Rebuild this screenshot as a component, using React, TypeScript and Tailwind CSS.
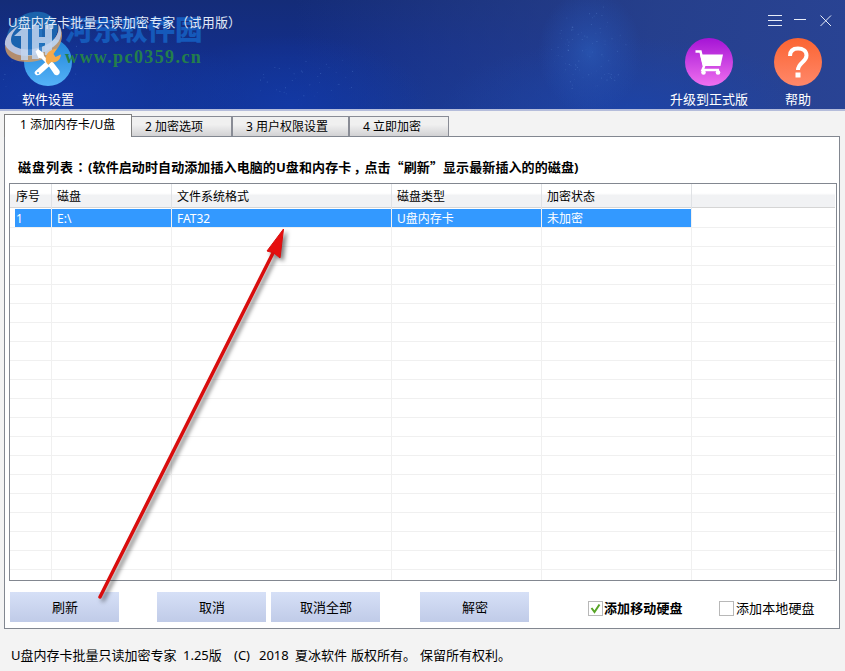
import type { ReactNode } from 'react';

const columns = [
  { label: '序号', value: '1' },
  { label: '磁盘', value: 'E:\\' },
  { label: '文件系统格式', value: 'FAT32' },
  { label: '磁盘类型', value: 'U盘内存卡' },
  { label: '加密状态', value: '未加密' },
];

const grid = 'grid grid-cols-[42px_120px_220px_150px_150px_1fr]';

/** Full-width punctuation, centred in its cell */
function Punct({ children }: { children: ReactNode }) {
  return <span className="font-['Noto_Sans_CJK_TC',sans-serif]">{children}</span>;
}

/** Cluster of faint stars scattered over the header */
function Stars({ cx, cy, rx, ry, count }: { cx: number; cy: number; rx: number; ry: number; count: number }) {
  return (
    <g fill="#7fb0f0">
      {Array.from({ length: count }, (_, i) => {
        const angle = i * i * 1.37;
        const r = Math.sqrt((i + 0.5) / count);
        const jitter = ((i * 37) % 11) - 5;
        return (
          <circle
            key={i}
            cx={cx + Math.cos(angle) * rx * r + jitter}
            cy={cy + Math.sin(angle) * ry * r - jitter}
            r={0.5}
            opacity={0.1 + ((i * 7) % 5) * 0.06}
          />
        );
      })}
    </g>
  );
}

function HeaderBackground() {
  return (
    <svg className="absolute inset-0" width="845" height="109" viewBox="0 0 845 109">
      <defs>
        <linearGradient id="sky" x1="0" y1="0" x2="0" y2="1">
          <stop offset="0" stopColor="#142c78" />
          <stop offset="0.45" stopColor="#132e88" />
          <stop offset="1" stopColor="#123494" />
        </linearGradient>
        <linearGradient id="side" x1="0" y1="0" x2="1" y2="0">
          <stop offset="0.35" stopColor="#2f4590" stopOpacity="0" />
          <stop offset="0.78" stopColor="#2a4490" stopOpacity="0.8" />
          <stop offset="1" stopColor="#2a4494" stopOpacity="0.95" />
        </linearGradient>
        <radialGradient id="glow">
          <stop offset="0" stopColor="#2a5ab8" stopOpacity="0.7" />
          <stop offset="0.5" stopColor="#2752b2" stopOpacity="0.4" />
          <stop offset="1" stopColor="#2452b5" stopOpacity="0" />
        </radialGradient>
        <radialGradient id="glowLeft">
          <stop offset="0" stopColor="#1339a6" stopOpacity="0.85" />
          <stop offset="1" stopColor="#1339a6" stopOpacity="0" />
        </radialGradient>
        <radialGradient id="glowRight">
          <stop offset="0" stopColor="#1c44aa" stopOpacity="0.85" />
          <stop offset="1" stopColor="#1c44aa" stopOpacity="0" />
        </radialGradient>
      </defs>
      <rect width="845" height="109" fill="url(#sky)" />
      <rect width="845" height="109" fill="url(#side)" />
      <ellipse cx="290" cy="105" rx="140" ry="70" fill="url(#glowLeft)" />
      <ellipse cx="60" cy="95" rx="190" ry="75" fill="url(#glowLeft)" />
      <ellipse cx="630" cy="112" rx="190" ry="75" fill="url(#glowRight)" />
      <ellipse cx="590" cy="52" rx="52" ry="62" fill="url(#glow)" />
      <Stars cx={590} cy={50} rx={34} ry={45} count={90} />
      <Stars cx={309} cy={80} rx={50} ry={20} count={40} />
      <Stars cx={30} cy={60} rx={60} ry={45} count={50} />
    </svg>
  );
}

function ToolButton({ label, className, children }: { label: string; className: string; children: ReactNode }) {
  return (
    <button className={`flex flex-col items-center ${className}`}>
      {children}
      <span className="mt-1 text-[13px] leading-[18px] whitespace-nowrap text-white">{label}</span>
    </button>
  );
}

function SettingsIcon() {
  return (
    <svg width="48" height="48" viewBox="0 0 48 48">
      <defs>
        <linearGradient id="blue" x1="0" y1="0" x2="0" y2="1">
          <stop offset="0" stopColor="#1e83d8" />
          <stop offset="1" stopColor="#55b2f7" />
        </linearGradient>
      </defs>
      <circle cx="24" cy="24" r="24" fill="url(#blue)" />
    </svg>
  );
}

/** Crossed screwdriver and wrench of the settings button */
function ToolsGlyph() {
  return (
    <svg className="absolute top-[38px] left-[24px]" width="48" height="48" viewBox="0 0 48 48">
      <path d="M11.500 13.500l2.500-2.500 5.500 4 .500 3 5 5-2.500 2.500-5-5-3-.500z" fill="#fff" />
      <path d="M24 27l4-4 7 9c2.500 3-1.500 7-4.500 4.500z" fill="#fff" />
      <path d="M22 24c-1-6 1-12 11-13.500l-3.500 5.500 2 3 5.500-2.500c-1 7-5.500 8.500-10 7.500l-3 3z" fill="#f5a94a" />
      <path d="M11.500 33l10-9 4 4-9.500 8.500c-4 2.500-7-1.500-4.500-3.500z" fill="#fff" />
      <circle cx="14" cy="35" r="1" fill="#4ba8ef" />
    </svg>
  );
}

function CartIcon() {
  return (
    <svg width="48" height="48" viewBox="0 0 48 48">
      <defs>
        <linearGradient id="purple" x1="0" y1="0" x2="0" y2="1">
          <stop offset="0" stopColor="#a514d5" />
          <stop offset="1" stopColor="#ef70ef" />
        </linearGradient>
      </defs>
      <circle cx="24" cy="24" r="24" fill="url(#purple)" />
      <path d="M15 16.500h23L35.500 28H18z" fill="#fff" />
      <path d="M10.500 13.500h5L19 28.500l-1.500 3.500H34" fill="none" stroke="#fff" strokeWidth="2.500" />
      <circle cx="18.500" cy="34.500" r="2.300" fill="#fff" />
      <circle cx="33" cy="34.500" r="2.300" fill="#fff" />
    </svg>
  );
}

function HelpIcon() {
  return (
    <svg width="48" height="48" viewBox="0 0 48 48">
      <defs>
        <linearGradient id="orange" x1="0" y1="0" x2="0" y2="1">
          <stop offset="0" stopColor="#fb6432" />
          <stop offset="1" stopColor="#ff886a" />
        </linearGradient>
      </defs>
      <circle cx="24" cy="24" r="24" fill="url(#orange)" />
      <path d="M16 18c0-5 3-7.500 8-7.500s8.500 2.500 8.500 7c0 6.500-8.500 7-8.500 14.500" fill="none" stroke="#fff" strokeWidth="4" />
      <rect x="21.500" y="34.500" width="5" height="5" fill="#fff" />
    </svg>
  );
}

/** Site badge laid over the top left corner */
function Watermark() {
  return (
    <div className="absolute top-[8px] left-[4px] flex">
      <svg width="59" height="60" viewBox="0 0 59 60">
        <g opacity="0.85">
          <path d="M3 28C7 10 24 2 37 4c8 1 13 6 16 12 2 5 0 12-4 17C38 44 16 47 4 38c-2-3-2-6-1-10z" fill="#1d6db5" />
          <path d="M1 37c0 13 10 17 24 17 18-1 32-11 33-26 0-5-1-8-4-12 2 8-2 14-8 20C33 46 11 49 1 37z" fill="#cf9c68" />
          <path d="M1 37c-1-7 5-15 15-20C9 23 5 30 8 36c7 8 26 7 39-2 6-5 9-11 7-18 4 5 4 11 1 17C46 47 12 56 1 37z" fill="#d5dded" />
        </g>
        <path d="M10 28l9-8h5v32h-7V28zM28 17h7v12h6V17h7v30h-7V35h-6v16h-7z" fill="#c3d5ef" opacity="0.85" />
        <path d="M24 20h4v27h-4zM35 17h3v12h-3zM35 36h3v12h-3z" fill="#2876c3" opacity="0.8" />
      </svg>
      <div className="flex flex-col pt-[5px] pl-[2px]">
        <span className="font-['Noto_Sans_CJK_SC',sans-serif] text-[27.500px] leading-[30px] font-black whitespace-nowrap text-[#1559ba]">
          河东软件园
        </span>
        <span className="pt-[3px] font-['Liberation_Serif',serif] text-[18px] leading-[22px] font-bold tracking-[1.400px] text-[#237f4b]">
          www.pc0359.cn
        </span>
      </div>
    </div>
  );
}

function Header() {
  return (
    <header className="relative h-[109px]">
      <HeaderBackground />
      <div className="relative z-10 flex h-[38px] justify-between">
        <h1 className="pt-[12px] pl-[8px] text-[13px] leading-[20px] tracking-[0.150px] whitespace-nowrap text-[#e0e9f7]">
          U盘内存卡批量只读加密专家<Punct>（</Punct>试用版<Punct>）</Punct>
        </h1>
        <svg width="64" height="12" viewBox="0 0 64 12" className="mt-[15px] mr-[13px]" fill="none" stroke="#e8edf8">
          <path d="M0 .5h14M0 5.500h14M0 10.500h14M26 4.500h12" />
          <path d="M52.500.5l10.500 10.500m0-10.500l-10.500 10.500" />
        </svg>
      </div>
      <div className="relative flex">
        <ToolButton label="软件设置" className="ml-[22px] w-[52px]">
          <SettingsIcon />
        </ToolButton>
        <ToolButton label="升级到正式版" className="mr-[25px] ml-auto w-[80px]">
          <CartIcon />
        </ToolButton>
        <ToolButton label="帮助" className="mr-[23px] w-[48px]">
          <HelpIcon />
        </ToolButton>
      </div>
      <Watermark />
      <ToolsGlyph />
    </header>
  );
}

function Tab({ label, className }: { label: string; className: string }) {
  return (
    <button
      className={`h-[20px] border-t border-r border-[#898c95] bg-linear-to-b from-[#f0f0f0] from-40% to-[#d2d2d4] text-left text-[12px] leading-[19px] whitespace-nowrap ${className}`}
    >
      {label}
    </button>
  );
}

function Tabs() {
  return (
    <nav className="relative z-10 -mb-px flex h-[23px] items-end">
      <button className="h-[23px] w-[128px] border border-b-0 border-[#808080] bg-white pb-[3px] pl-[15px] text-left text-[12px] leading-[19px] whitespace-nowrap">
        1 添加内存卡/U盘
      </button>
      <div className="mb-px flex">
        <Tab label="2 加密选项" className="w-[100px] pl-[13px]" />
        <Tab label="3 用户权限设置" className="w-[117px] border-l pl-[13px]" />
        <Tab label="4 立即加密" className="w-[100px] border-l pl-[13px]" />
      </div>
    </nav>
  );
}

function DiskTable() {
  return (
    <div className="ml-[4px] h-[398px] w-[828px] overflow-hidden border border-[#828790] bg-white pr-px text-[12px]">
      <div className={`h-[24px] border-b border-[#d5d5d5] bg-linear-to-b from-white from-40% to-[#f1f2f4] to-50% ${grid}`}>
        {columns.map((col, i) => (
          <div
            key={col.label}
            className={`border-r border-[#e0e2e5] leading-[26px] whitespace-nowrap ${i === 0 ? 'pl-[6px]' : 'pl-[5px]'}`}
          >
            {col.label}
          </div>
        ))}
        <div />
      </div>
      <div className={`h-[20px] border-b border-[#f0f0f0] pt-px ${grid}`}>
        {columns.map((col, i) => (
          <div
            key={col.label}
            className={`h-[18px] border-r border-[#f0f0f0] bg-[#3399ff] leading-[19px] whitespace-nowrap text-white ${i === 0 ? 'ml-[5px] pl-px' : 'pl-[5px]'}`}
          >
            {col.value}
          </div>
        ))}
        <div />
      </div>
      {Array.from({ length: 19 }, (_, row) => (
        <div key={row} className={`h-[19px] border-b border-[#f0f0f0] ${grid}`}>
          {columns.map((col) => (
            <div key={col.label} className="border-r border-[#f0f0f0]" />
          ))}
        </div>
      ))}
    </div>
  );
}

function ActionButton({ label, className }: { label: string; className: string }) {
  return (
    <button
      className={`h-[30px] w-[109px] bg-linear-to-b from-[#d6e0f7] to-[#c0cbe8] pl-px text-[13px] leading-[29px] ${className}`}
    >
      {label}
    </button>
  );
}

function Checkbox({ label, checked, className }: { label: string; checked?: boolean; className: string }) {
  return (
    <label className={`flex h-[15px] items-center whitespace-nowrap ${className}`}>
      <span className="flex size-[15px] items-center justify-center border border-[#b8b8b8] bg-white">
        {checked && (
          <svg width="11" height="11" viewBox="0 0 11 11" fill="none" stroke="#58a527" strokeWidth="2">
            <path d="M1.500 5l3 4L9.500 1.500" />
          </svg>
        )}
      </span>
      <span className={`text-[13px] leading-[15px] tracking-[0.100px] ${checked ? 'pl-px font-bold' : 'pl-[2px]'}`}>
        {label}
      </span>
    </label>
  );
}

/** Red pointer from the refresh button to the selected row */
function Arrow() {
  return (
    <svg
      className="pointer-events-none absolute top-[220px] left-[90px] z-20 drop-shadow-[3px_3px_2px_rgba(0,0,0,0.5)]"
      width="210"
      height="390"
      viewBox="0 0 210 390"
    >
      <path d="M10 377L184 31" stroke="#d90d0d" strokeWidth="3.500" strokeLinecap="round" />
      <path d="M193.500 9l-16.500 22 7 2 6 5z" fill="#e60e0e" stroke="#d90d0d" />
    </svg>
  );
}

export default function App() {
  return (
    <div className="relative h-[671px] w-[845px] overflow-hidden bg-[#f3f3f3] font-['Noto_Sans','Noto_Sans_CJK_SC',sans-serif] text-black">
      <Header />
      <main className="border-t-2 border-[#b5bddb] pt-[3px] pl-[4px]">
        <Tabs />
        <section className="h-[493px] w-[836px] border border-[#828790] bg-white">
          <h2 className="h-[46px] pt-[20px] pl-[13px] text-[13px] leading-[20px] font-bold tracking-[0.100px] whitespace-nowrap">
            <span className="tracking-[1px]">
              磁盘列表<Punct>：</Punct>
            </span>
            (软件启动时自动添加插入电脑的U盘和内存卡<span className="inline-block w-[13px] pl-[2px]">，</span>点击
            <span className="font-['Noto_Sans_CJK_SC',sans-serif]">“</span>刷新
            <span className="font-['Noto_Sans_CJK_SC',sans-serif]">”</span>
            显示最新插入的的磁盘)
          </h2>
          <DiskTable />
          <div className="flex pt-[11px]">
            <ActionButton label="刷新" className="ml-[5px]" />
            <ActionButton label="取消" className="ml-[38px]" />
            <ActionButton label="取消全部" className="ml-[5px]" />
            <ActionButton label="解密" className="ml-[40px]" />
            <Checkbox label="添加移动硬盘" checked className="mt-[9px] w-[95px] ml-[59px]" />
            <Checkbox label="添加本地硬盘" className="mt-[9px] ml-[36px]" />
          </div>
        </section>
      </main>
      <footer className="flex pt-[16px] pl-[11px] text-[13px] leading-[20px] whitespace-nowrap">
        <span className="w-[172px]">U盘内存卡批量只读加密专家</span>
        <span className="w-[51px]">1.25版</span>
        <span className="w-[25px]">(C)</span>
        <span className="w-[36px]">2018</span>
        <span className="w-[56px]">夏冰软件</span>
        <span className="w-[69px]">版权所有。</span>
        <span>保留所有权利。</span>
      </footer>
      <Arrow />
    </div>
  );
}
